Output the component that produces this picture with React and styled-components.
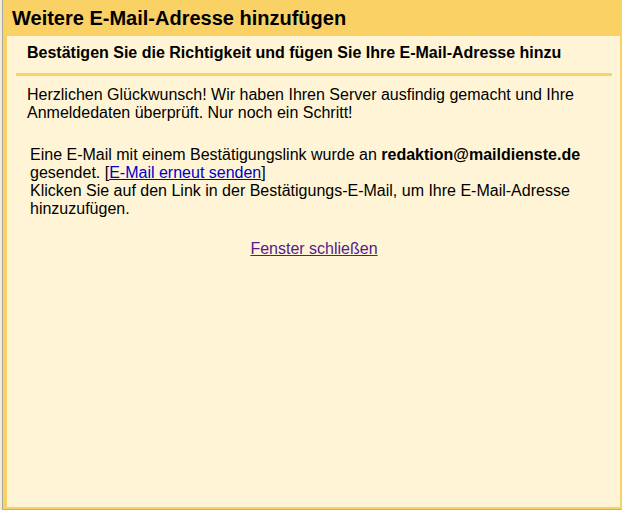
import React from "react";
import styled, { createGlobalStyle } from "styled-components";

const Global = createGlobalStyle`
  html, body { margin: 0; padding: 0; background: #f3ecd6; }
  body { font-family: Arial, "Liberation Sans", sans-serif; }
`;

const Screen = styled.div`
  width: 622px;
  height: 510px;
  box-sizing: border-box;
  padding-left: 2px;
  display: flex;
`;

const Window = styled.div`
  flex: 1;
  display: flex;
  flex-direction: column;
  border-left: 1px solid #a8a8a0;
  background: #fad165;
  padding: 0 2px 2px 4px;
  border-bottom: 1px solid #c9b06a;
`;

const TitleBar = styled.h1`
  margin: 0;
  height: 36px;
  display: flex;
  align-items: center;
  padding-left: 5px;
  font-family: Arial, "Liberation Sans", sans-serif;
  font-weight: bold;
  font-size: 20px;
  color: #000;
`;

const Panel = styled.div`
  flex: 1;
  background: #fff5d6;
  padding: 0 8px 0 9px;
`;

const SubHead = styled.h2`
  margin: 0;
  padding: 8px 0 0 11px;
  height: 29px;
  border-bottom: 3px solid #f9d26b;
  font-family: Arial, "Liberation Sans", sans-serif;
  font-weight: bold;
  font-size: 16px;
  line-height: 18px;
  color: #000;
`;

const Para = styled.p`
  margin: ${(p) => p.$top}px 0 0 ${(p) => p.$left}px;
  font-size: 16px;
  line-height: 18px;
  color: #000;
`;

const Strong = styled.b`
  font-weight: bold;
`;

const Link = styled.a`
  color: ${(p) => (p.$visited ? "#551a8b" : "#0000cc")};
  text-decoration: underline;
  cursor: pointer;
`;

const Center = styled.div`
  margin-top: 22px;
  text-align: center;
  font-size: 16px;
  line-height: 18px;
`;

export default function App() {
  return (
    <>
      <Global />
      <Screen>
        <Window>
          <TitleBar>Weitere E-Mail-Adresse hinzufügen</TitleBar>
          <Panel>
            <SubHead>Bestätigen Sie die Richtigkeit und fügen Sie Ihre E-Mail-Adresse hinzu</SubHead>
            <Para $top={10} $left={11}>
              Herzlichen Glückwunsch! Wir haben Ihren Server ausfindig gemacht und Ihre
              <br />
              Anmeldedaten überprüft. Nur noch ein Schritt!
            </Para>
            <Para $top={24} $left={14}>
              Eine E-Mail mit einem Bestätigungslink wurde an <Strong>redaktion@maildienste.de</Strong>
              <br />
              gesendet. [<Link href="#">E-Mail erneut senden</Link>]
              <br />
              Klicken Sie auf den Link in der Bestätigungs-E-Mail, um Ihre E-Mail-Adresse
              <br />
              hinzuzufügen.
            </Para>
            <Center>
              <Link $visited href="#">Fenster schließen</Link>
            </Center>
          </Panel>
        </Window>
      </Screen>
    </>
  );
}
